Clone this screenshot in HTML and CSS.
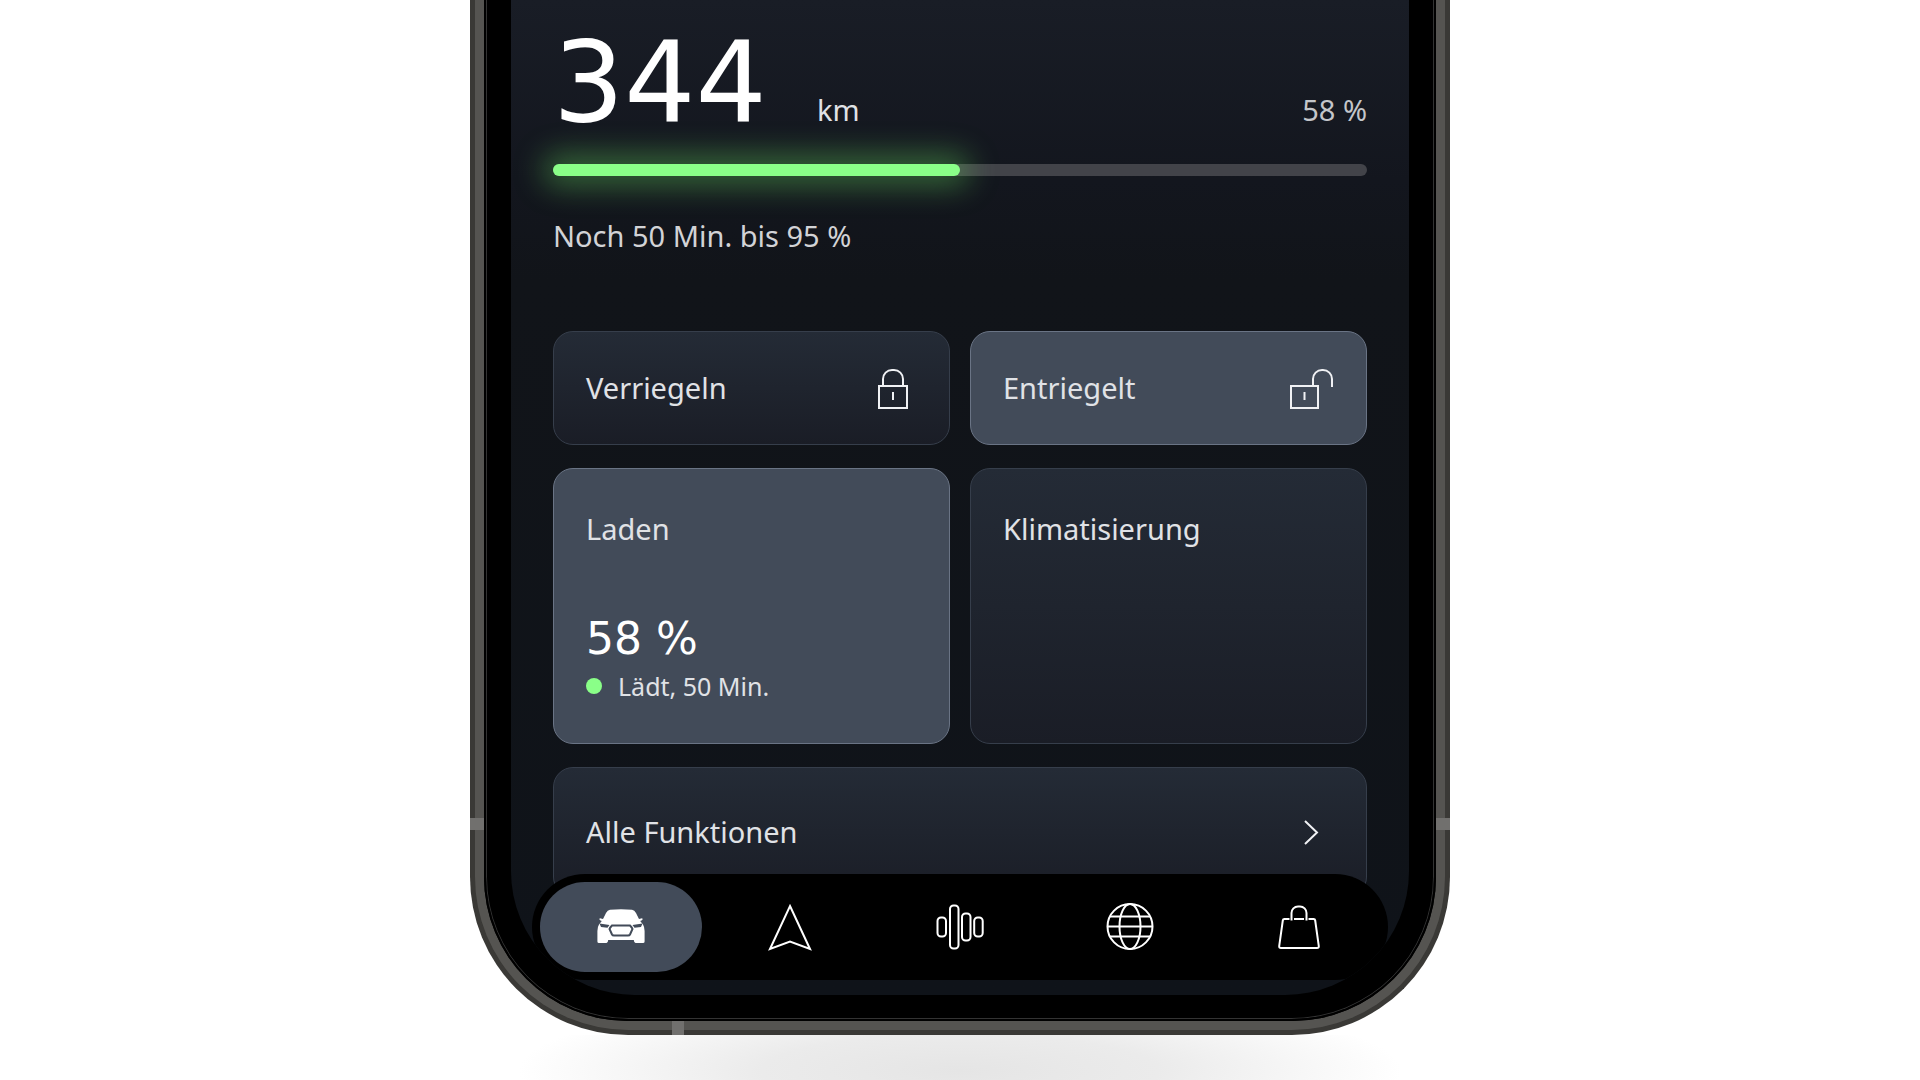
FILE: index.html
```html
<!DOCTYPE html>
<html lang="de">
<head>
    <meta charset="UTF-8">
    <meta name="viewport" content="width=device-width, initial-scale=1.0">
    <title>Fahrzeug</title>
    <link rel="stylesheet" href="styles.css">
</head>
<body>
    <div class="phone">
        <div class="rim">
            <div class="bezel">
                <div class="screen">
                    <main class="content">
                        <section class="range">
                            <div class="range-row">
                                <span class="range-value">344</span>
                                <span class="range-unit">km</span>
                                <span class="range-percent">58 %</span>
                            </div>
                            <div class="bar" role="progressbar" aria-label="Ladestand" aria-valuemin="0" aria-valuemax="100" aria-valuenow="58">
                                <div class="bar-fill" style="width: 50%"></div>
                            </div>
                            <p class="range-note">Noch 50 Min. bis 95 %</p>
                        </section>

                        <section class="cards">
                            <button type="button" class="card">
                                <span>Verriegeln</span>
                                <svg class="card-icon" viewBox="0 0 44 44" aria-hidden="true">
                                    <rect x="6" y="20" width="28" height="22"/>
                                    <path d="M10 20v-7a9 9 0 0 1 9-9h2a9 9 0 0 1 9 9v7M20 26v8"/>
                                </svg>
                            </button>
                            <button type="button" class="card active">
                                <span>Entriegelt</span>
                                <svg class="card-icon" viewBox="0 0 44 44" aria-hidden="true">
                                    <rect x="1" y="20" width="27" height="22"/>
                                    <path d="M23 20v-7a9 9 0 0 1 9-9h1a9 9 0 0 1 9 9v8M14.500 26v8"/>
                                </svg>
                            </button>
                            <button type="button" class="card tall active">
                                <span>Laden</span>
                                <span class="charge">
                                    <span class="charge-value">58 %</span>
                                    <span class="charge-status"><span class="dot"></span>Lädt, 50 Min.</span>
                                </span>
                            </button>
                            <button type="button" class="card tall">
                                <span>Klimatisierung</span>
                            </button>
                            <button type="button" class="card wide">
                                <span>Alle Funktionen</span>
                                <svg class="card-icon" viewBox="0 0 44 44" aria-hidden="true">
                                    <path d="M15 11l12 11.500l-12 11.500"/>
                                </svg>
                            </button>
                        </section>
                    </main>

                    <nav class="tabs">
                        <a href="#fahrzeug" class="tab current" aria-label="Fahrzeug">
                            <svg class="car" viewBox="0 0 48 48" aria-hidden="true">
                                <path class="car-body" d="M13 6.800Q24 5.500 35 6.800Q37.500 7.200 39 10L42 16L45 15.300Q46.500 16 45 17.200L43.200 18L46 21.500Q47.600 24 47.600 28V38.500Q47.600 40 46 40H38.500Q37 40 36.800 37H11.200Q11 40 9.500 40H2Q.4 40 .4 38.500V28Q.4 24 2 21.500L4.800 18L3 17.200Q1.500 16 3 15.300L6 16L9 10Q10.500 7.200 13 6.800Z"/>
                                <path class="car-light" d="M2.500 20.500L12.500 22L10.500 24.800L4 24ZM45.500 20.500L35.500 22L37.500 24.800L44 24Z"/>
                                <path class="car-grille" d="M15 22.500H33Q35 24.500 35.500 26L33 31.500Q32.500 32.500 31 32.500H17Q15.500 32.500 15 31.500L12.500 26Q13 24.500 15 22.500Z"/>
                            </svg>
                        </a>
                        <a href="#navigation" class="tab" aria-label="Navigation">
                            <svg viewBox="0 0 48 48" aria-hidden="true">
                                <path d="M24 3L44 46L24 38.500L4 46Z"/>
                            </svg>
                        </a>
                        <a href="#audio" class="tab" aria-label="Audio">
                            <svg viewBox="0 0 48 48" aria-hidden="true">
                                <rect x="1.500" y="14.500" width="8.500" height="19" rx="3.500"/>
                                <rect x="14" y="2.500" width="8.500" height="43" rx="3.500"/>
                                <rect x="26" y="10.500" width="8.500" height="27" rx="3.500"/>
                                <rect x="38.200" y="14.500" width="8.500" height="19" rx="3.500"/>
                            </svg>
                        </a>
                        <a href="#dienste" class="tab" aria-label="Dienste">
                            <svg viewBox="0 0 48 48" aria-hidden="true">
                                <circle cx="24" cy="23.500" r="22.500"/>
                                <ellipse cx="24" cy="23.500" rx="10.500" ry="22.500"/>
                                <path d="M4 13.500h40M1.500 23.500h45M4 33.500h40"/>
                            </svg>
                        </a>
                        <a href="#shop" class="tab" aria-label="Shop">
                            <svg viewBox="0 0 48 48" aria-hidden="true">
                                <path d="M14.500 16H9.500Q8 16 7.800 17.500L4.200 43Q4 45 6 45H42Q44 45 43.800 43L40.200 17.500Q40 16 38.500 16H33.500M19 16h10M16.500 17.500V10a6.500 6.500 0 0 1 6.500-6.500h2a6.500 6.500 0 0 1 6.500 6.500v7.500"/>
                            </svg>
                        </a>
                    </nav>
                </div>
            </div>
        </div>
        <span class="band band-left"></span>
        <span class="band band-right"></span>
        <span class="band band-bottom"></span>
    </div>
    <div class="floor-shadow"></div>
</body>
</html>
```

FILE: styles.css
```css
* {
    box-sizing: border-box;
}
body {
    margin: 0;
    background-color: #fff;
    color: #e0e2e6;
    font-family: "Noto Sans", sans-serif;
    font-size: 29px;
    line-height: 40px;
}

/* phone body: dark outer edge, metal rim, black bezel */
.phone {
    position: relative;
    max-width: 980px;
    margin: 0 auto;
    border: 5px solid #3a3936;
    border-top: 0;
    border-radius: 0 0 158px 158px;
    background-color: #3a3936;
}
.rim {
    border: 9px solid #555451;
    border-top: 0;
    border-radius: 0 0 153px 153px;
    background-color: #000;
}
.bezel {
    padding: 0 25px 24px;
    border: 2px solid #000;
    border-top: 0;
    border-radius: 0 0 144px 144px;
    background-color: #000;
    box-shadow: inset 1px 0 #333, inset -1px 0 #333, inset 0 -1px #333;
}
.screen {
    position: relative;
    overflow: hidden;
    border-radius: 0 0 124px 124px;
    background: linear-gradient(#191d26 0, #13161e 180px, #111419 280px, #0f1319 100%);
}
.band {
    position: absolute;
    background-color: #71706e;
}
.band-left,
.band-right {
    bottom: 200px;
    width: 14px;
    height: 12px;
}
.band-left {
    left: -5px;
}
.band-right {
    right: -5px;
}
.band-bottom {
    bottom: -5px;
    left: 197px;
    width: 12px;
    height: 14px;
}
.floor-shadow {
    height: 45px;
    max-width: 980px;
    margin: 0 auto;
    background: radial-gradient(ellipse 45% 180% at 50% 80%, #e5e5e5 0, #ebebeb 45%, #fff 100%);
}

.content {
    padding: 26px 42px 98px;
}

/* range */
.range-row {
    display: flex;
    align-items: baseline;
}
.range-value {
    min-width: 264px;
    color: #fff;
    font-family: "DejaVu Sans", sans-serif;
    font-size: 112px;
    line-height: 112px;
}
.range-percent {
    margin-left: auto;
    color: #c4c6ca;
}
.bar {
    height: 12px;
    margin-top: 26px;
    border-radius: 6px;
    background-color: #424349;
}
.bar-fill {
    height: 100%;
    border-radius: 6px;
    background-color: #8aff88;
    box-shadow: 0 0 30px 10px rgba(110, 235, 100, 0.38);
}
.range-note {
    margin: 40px 0 75px;
    color: #d2d3d6;
}

/* cards */
.cards {
    display: grid;
    grid-template-columns: 1fr 1fr;
    gap: 23px 20px;
}
.card {
    display: flex;
    align-items: center;
    justify-content: space-between;
    min-height: 114px;
    padding: 0 32px;
    border: 1px solid #363e4b;
    border-radius: 20px;
    background: linear-gradient(#242b36, #1a1d26);
    color: inherit;
    font: inherit;
    text-align: left;
    cursor: pointer;
}
.card.active {
    border-color: #6a7485;
    background: #424b59;
}
.card.tall {
    flex-direction: column;
    align-items: flex-start;
    min-height: 276px;
    padding: 40px 32px;
}
.card.wide {
    grid-column: 1 / -1;
    min-height: 130px;
}
.card-icon {
    width: 44px;
    height: 44px;
    fill: none;
    stroke: #f0f1f4;
    stroke-width: 2;
}
.charge-value {
    display: block;
    color: #fff;
    font-family: "DejaVu Sans", sans-serif;
    font-size: 44px;
    line-height: 44px;
}
.charge-status {
    display: flex;
    align-items: center;
    gap: 16px;
    margin-top: 8px;
    font-size: 25px;
    line-height: 34px;
}
.dot {
    width: 16px;
    height: 16px;
    border-radius: 50%;
    background-color: #8aff88;
}

/* tab bar floats over the end of the list */
.tabs {
    position: absolute;
    right: 21px;
    bottom: 15px;
    left: 21px;
    display: flex;
    gap: 8px;
    padding: 8px;
    border-radius: 53px;
    background-color: #000;
}
.tab {
    display: flex;
    flex: 1;
    align-items: center;
    justify-content: center;
    height: 90px;
    border-radius: 45px;
}
.tab.current {
    background-color: #424b59;
}
.tab svg {
    width: 48px;
    height: 48px;
    fill: none;
    stroke: #fff;
    stroke-width: 2;
}
.tab .car {
    stroke: none;
}
.car-body {
    fill: #fff;
}
.car-light {
    fill: #424b59;
}
.tab .car-grille {
    stroke: #424b59;
}
```
